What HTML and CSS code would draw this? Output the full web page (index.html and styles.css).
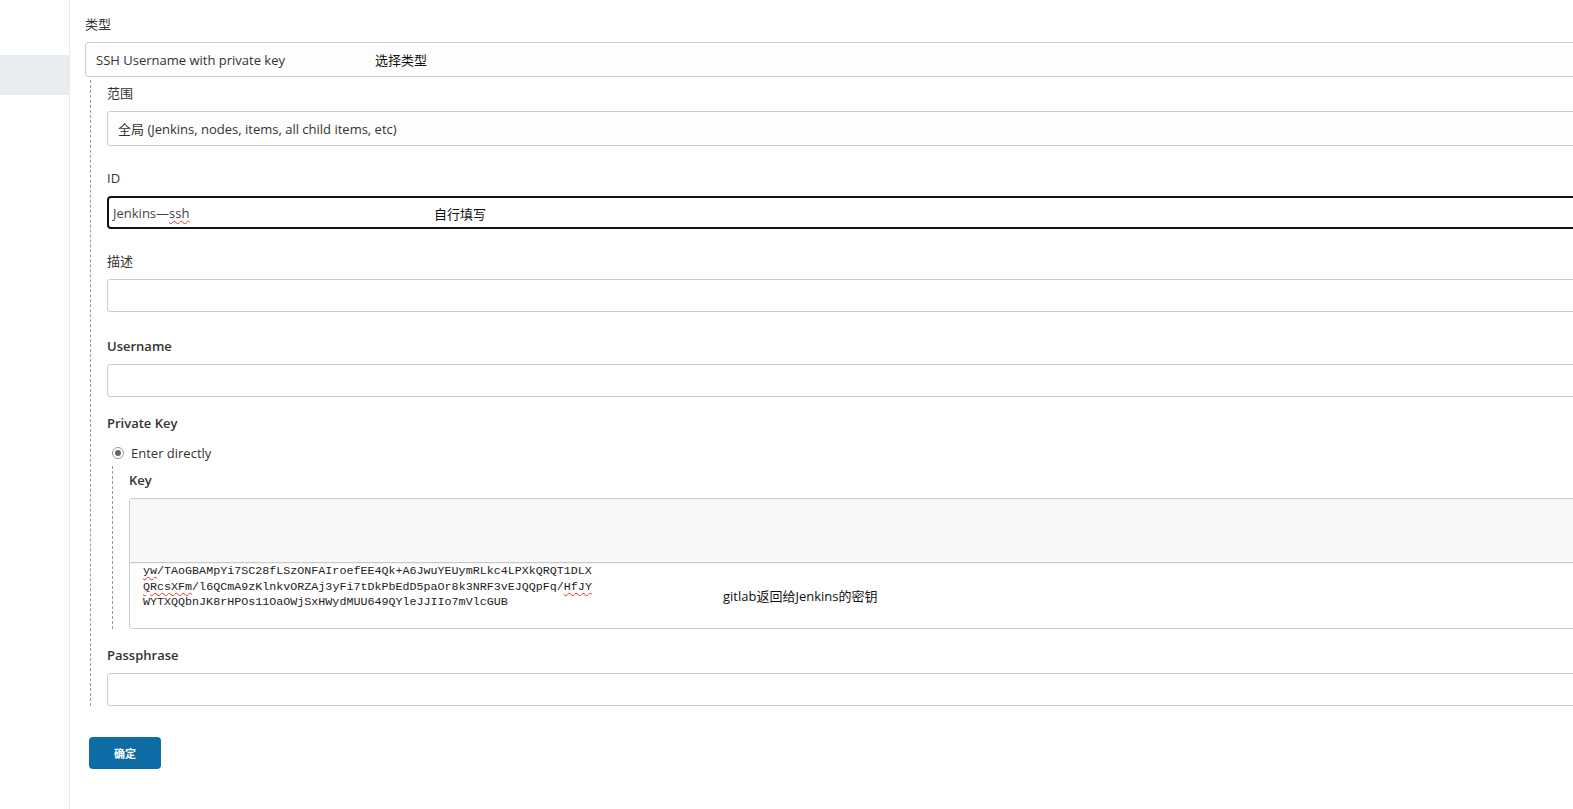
FILE: index.html
```html
<!DOCTYPE html>
<html lang="zh">
<head>
<meta charset="utf-8">
<title>Credentials</title>
<link rel="stylesheet" href="styles.css">
</head>
<body>
<div class="page">
  <aside class="sidebar">
    <div class="side-active"></div>
  </aside>
  <main class="main">
    <div class="label first">类型</div>
    <div class="field select-field">
      <span class="value">SSH Username with private key</span>
      <span class="note note-type">选择类型</span>
    </div>
    <div class="nested">
      <div class="label scope-label">范围</div>
      <div class="field select-field">
        <span class="value">全局 (Jenkins, nodes, items, all child items, etc)</span>
      </div>

      <div class="label gap">ID</div>
      <div class="field focused">
        <span class="value id-value">Jenkins—<span class="squiggle">ssh</span></span>
        <span class="note note-id">自行填写</span>
      </div>

      <div class="label gap">描述</div>
      <div class="field"></div>

      <div class="label gap-lg bold">Username</div>
      <div class="field"></div>

      <div class="label gap-sm bold">Private Key</div>
      <div class="radio-row">
        <span class="radio"><span class="radio-dot"></span></span>
        <span class="radio-text">Enter directly</span>
      </div>
      <div class="key-block">
        <div class="label bold key-label">Key</div>
        <div class="keybox">
          <div class="key-top"></div>
          <div class="key-bottom">
            <div class="key-text"><span class="squiggle">yw</span>/TAoGBAMpYi7SC28fLSzONFAIroefEE4Qk+A6JwuYEUymRLkc4LPXkQRQT1DLX<br><span class="squiggle">QRcsXFm</span>/l6QCmA9zKlnkvORZAj3yFi7tDkPbEdD5paOr8k3NRF3vEJQQpFq/<span class="squiggle">HfJY</span><br>WYTXQQbnJK8rHPOs11OaOWjSxHWydMUU649QYleJJIIo7mVlcGUB</div>
            <span class="note note-key">gitlab返回给Jenkins的密钥</span>
          </div>
        </div>
      </div>

      <div class="label gap-sm bold">Passphrase</div>
      <div class="field"></div>
    </div>
    <button class="btn">确定</button>
  </main>
</div>
</body>
</html>
```

FILE: styles.css
```css
html, body {
  margin: 0;
  padding: 0;
  background: #fff;
  overflow: hidden;
}
body {
  font-family: "Open Sans", "Noto Sans", "Noto Sans CJK SC", sans-serif;
  font-size: 13px;
  color: #333;
}
.page {
  display: flex;
  width: 1573px;
  height: 809px;
}
.sidebar {
  width: 69px;
  flex: 0 0 69px;
  border-right: 1px solid #ebebeb;
}
.side-active {
  margin-top: 55px;
  height: 40px;
  background: #eaedf0;
}
.main {
  flex: 1;
  padding: 15px 0 0 15px;
  min-width: 0;
}
.label {
  height: 18px;
  line-height: 18px;
  margin-bottom: 9px;
  color: #333;
  white-space: nowrap;
}
.label.bold {
  font-weight: 600;
}
.label.gap { margin-top: 23px; }
.label.gap-lg { margin-top: 25px; }
.label.gap-sm { margin-top: 17px; }
.field {
  position: relative;
  box-sizing: border-box;
  width: 1600px;
  height: 33px;
  border: 1px solid #ccc;
  border-radius: 3px;
  background: #fff;
  display: flex;
  align-items: center;
}
.select-field {
  height: 35px;
  background: #fdfdfd;
}
.select-field .value {
  padding-left: 10px;
}
.focused {
  border: 2px solid #111;
  border-radius: 4px;
}
.id-value {
  padding-left: 4px;
  color: #444;
}
.squiggle {
  text-decoration: underline wavy #d33;
  text-decoration-thickness: 1px;
  text-underline-offset: 2px;
}
.note {
  position: absolute;
  color: #111;
  white-space: nowrap;
}
.note-type { left: 289px; top: 7px; }
.note-id { left: 325px; top: 6px; }
.nested {
  margin: 3px 0 0 5px;
  padding: 4px 0 0 16px;
  border-left: 1px dashed #999;
  width: 1600px;
}
.radio-row {
  display: flex;
  align-items: center;
  height: 18px;
  margin: 12px 0 0 5px;
}
.radio {
  box-sizing: border-box;
  width: 12px;
  height: 12px;
  border-radius: 50%;
  border: 1px solid #999;
  background: #fff;
  display: flex;
  align-items: center;
  justify-content: center;
  margin-right: 7px;
}
.radio-dot {
  width: 6px;
  height: 6px;
  border-radius: 50%;
  background: #666;
}
.radio-text {
  color: #333;
}
.key-block {
  margin: 4px 0 0 5px;
  padding: 5px 0 0 16px;
  border-left: 1px dashed #999;
}
.key-label {
  margin-bottom: 9px;
}
.keybox {
  box-sizing: border-box;
  width: 1600px;
  height: 131px;
  border: 1px solid #ccc;
  border-radius: 3px;
  overflow: hidden;
  display: flex;
  flex-direction: column;
}
.key-top {
  height: 63px;
  background: #f8f8f8;
  border-bottom: 1px solid #c8c8c8;
}
.key-bottom {
  position: relative;
  flex: 1;
  background: #fff;
  border-top: 1px solid #f4f4f4;
}
.key-text {
  padding: 0 0 0 13px;
  font-family: "Liberation Mono", "DejaVu Sans Mono", monospace;
  font-size: 11.7px;
  line-height: 15.5px;
  color: #222;
  white-space: nowrap;
}
.note-key {
  left: 593px;
  top: 22px;
}
.btn {
  display: block;
  margin: 31px 0 0 4px;
  width: 72px;
  height: 32px;
  border: none;
  border-radius: 4px;
  background: #0d6ca4;
  color: #fff;
  font-family: "Noto Sans CJK SC", sans-serif;
  font-weight: 700;
  font-size: 11px;
  cursor: pointer;
}
```
